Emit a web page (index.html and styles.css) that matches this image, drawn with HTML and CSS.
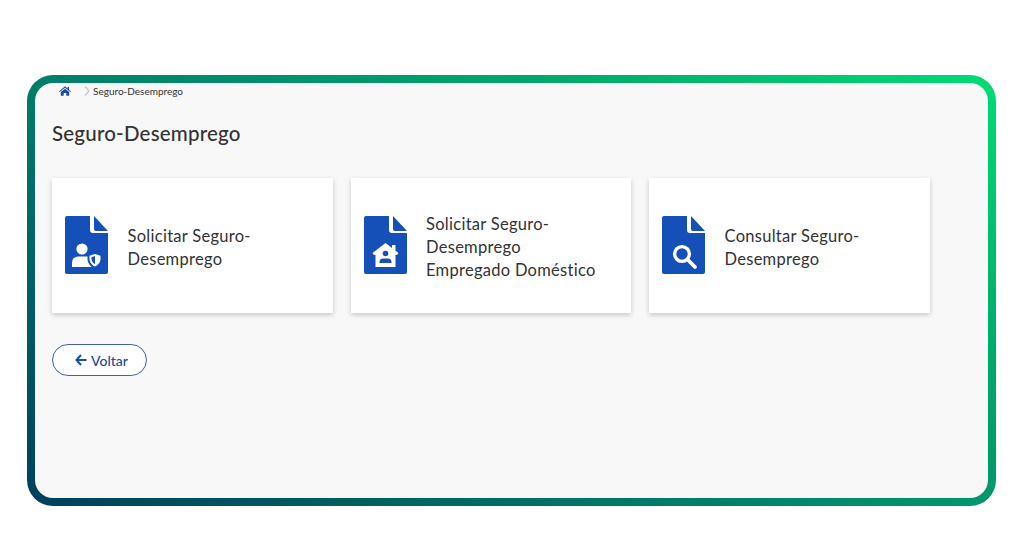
FILE: index.html
```html
<!DOCTYPE html>
<html lang="pt-BR">
<head>
    <meta charset="UTF-8">
    <meta name="viewport" content="width=device-width, initial-scale=1.0">
    <title>Seguro-Desemprego</title>
    <link rel="stylesheet" href="styles.css">
</head>
<body>
    <div class="frame">
        <div class="panel">
            <div class="breadcrumb">
                <svg class="home-icon" viewBox="0 0 12 10" aria-hidden="true">
                    <path d="M6 0.3 L8.6 2.5 V1 H10 V3.7 L12 5.4 L11.3 6 L6 1.7 L0.7 6 L0 5.4 Z"/>
                    <path d="M6 2.7 L10.2 6.1 V9.7 H7.3 V7 H4.7 V9.7 H1.8 V6.1 Z"/>
                </svg>
                <svg class="chevron" viewBox="0 0 6 10" aria-hidden="true">
                    <path d="M1 0.5 L5 5 L1 9.5" fill="none" stroke="#c9c9c9" stroke-width="1.3"/>
                </svg>
                <span>Seguro-Desemprego</span>
            </div>

            <h1 class="page-title">Seguro-Desemprego</h1>

            <div class="cards">
                <a class="card" href="#">
                    <svg class="doc-icon" viewBox="0 0 43 58" aria-hidden="true">
                        <path class="doc" d="M2 0 H25 V14 a3 3 0 0 0 3 3 H43 V56 a2 2 0 0 1 -2 2 H2 a2 2 0 0 1 -2 -2 V2 a2 2 0 0 1 2 -2 Z"/>
                        <path class="doc" d="M29 0 L43 15 H31 a2 2 0 0 1 -2 -2 Z"/>
                        <circle class="mark" cx="17" cy="33" r="5.6"/>
                        <path class="mark" d="M7 51 V46.5 a6 6 0 0 1 6 -6 H23 a6 6 0 0 1 6 6 V51 Z"/>
                        <path class="doc" d="M30 35.5 L37.5 38 V43 C37.5 47.5 34 51 30 53 C26 51 22.5 47.5 22.5 43 V38 Z"/>
                        <path class="mark" d="M30 38 L35.5 39.8 V43 C35.5 46.3 33 49 30 50.5 C27 49 24.5 46.3 24.5 43 V39.8 Z"/>
                        <path class="doc" d="M30 40 V48.2 C28.2 47.2 26.5 45.3 26.5 43 V41.2 Z"/>
                    </svg>
                    <span class="card-text">Solicitar Seguro-<br>Desemprego</span>
                </a>
                <a class="card" href="#">
                    <svg class="doc-icon" viewBox="0 0 43 58" aria-hidden="true">
                        <path class="doc" d="M2 0 H25 V14 a3 3 0 0 0 3 3 H43 V56 a2 2 0 0 1 -2 2 H2 a2 2 0 0 1 -2 -2 V2 a2 2 0 0 1 2 -2 Z"/>
                        <path class="doc" d="M29 0 L43 15 H31 a2 2 0 0 1 -2 -2 Z"/>
                        <path class="mark" d="M21.5 27 L28 32 V29 H31.5 V34.8 L34.5 37 L33 39 H31.5 V51 H11.5 V39 H10 L8.5 37 Z"/>
                        <circle class="doc" cx="21.5" cy="37.5" r="2.8"/>
                        <path class="doc" d="M15.5 47 V46 a3.5 3.5 0 0 1 3.5 -3.5 H24 a3.5 3.5 0 0 1 3.5 3.5 V47 Z"/>
                    </svg>
                    <span class="card-text">Solicitar Seguro-<br>Desemprego<br>Empregado Doméstico</span>
                </a>
                <a class="card" href="#">
                    <svg class="doc-icon" viewBox="0 0 43 58" aria-hidden="true">
                        <path class="doc" d="M2 0 H25 V14 a3 3 0 0 0 3 3 H43 V56 a2 2 0 0 1 -2 2 H2 a2 2 0 0 1 -2 -2 V2 a2 2 0 0 1 2 -2 Z"/>
                        <path class="doc" d="M29 0 L43 15 H31 a2 2 0 0 1 -2 -2 Z"/>
                        <circle cx="20" cy="38" r="7.4" fill="none" stroke="#fff" stroke-width="3.4"/>
                        <path d="M26 44 L33 51" fill="none" stroke="#fff" stroke-width="3.8" stroke-linecap="round"/>
                    </svg>
                    <span class="card-text">Consultar Seguro-<br>Desemprego</span>
                </a>
            </div>

            <a class="back-btn" href="#">
                <svg class="arrow" viewBox="0 0 12 12" aria-hidden="true">
                    <path d="M6 1 L1.5 6 L6 11 M2 6 H11.5" fill="none" stroke="#1a4ea0" stroke-width="2"/>
                </svg>
                <span>Voltar</span>
            </a>
        </div>
    </div>
</body>
</html>
```

FILE: styles.css
```css
body {
    margin: 0;
    background-color: #fff;
    font-family: Lato, "Open Sans", sans-serif;
    color: #333;
}

.frame {
    margin: 75px 28px 30px 27px;
    height: 431px;
    padding: 8px;
    box-sizing: border-box;
    border-radius: 26px;
    background: linear-gradient(33deg, #003f5c 0%, #017a68 38%, #00a86c 72%, #00dc74 100%);
}

.panel {
    height: 100%;
    box-sizing: border-box;
    padding: 0 17px;
    border-radius: 18px;
    background-color: #f8f8f8;
}

.breadcrumb {
    display: flex;
    align-items: center;
    height: 16px;
    padding-left: 7px;
    font-size: 10px;
}

.home-icon {
    width: 12px;
    height: 10px;
    fill: #1a4ea0;
}

.chevron {
    width: 6px;
    height: 10px;
    margin: 0 3px 0 13px;
}

.page-title {
    margin: 22px 0 0;
    font-size: 20.5px;
    line-height: 24px;
    font-weight: 500;
    letter-spacing: 0.2px;
}

.cards {
    display: flex;
    gap: 18px;
    margin-top: 33px;
}

.card {
    display: flex;
    align-items: center;
    gap: 19.5px;
    width: 280.5px;
    height: 135px;
    padding-left: 13px;
    box-sizing: border-box;
    background-color: #fff;
    box-shadow: 0 2px 5px rgba(0, 0, 0, 0.2);
    color: #333;
    text-decoration: none;
}

.doc-icon {
    width: 43px;
    height: 58px;
    margin-bottom: 1px;
    flex-shrink: 0;
}

.doc {
    fill: #1450b8;
}

.mark {
    fill: #fff;
}

.card-text {
    padding-top: 4px;
    font-size: 16.5px;
    line-height: 23px;
    letter-spacing: 0.28px;
}

.back-btn {
    display: flex;
    align-items: center;
    justify-content: center;
    gap: 4px;
    width: 95px;
    height: 32px;
    margin-top: 31px;
    padding-left: 4px;
    box-sizing: border-box;
    border: 1px solid #44639a;
    border-radius: 16px;
    background-color: #fff;
    color: #1f4a94;
    font-size: 14px;
    font-weight: 500;
    text-decoration: none;
}

.arrow {
    width: 12px;
    height: 12px;
}
```
